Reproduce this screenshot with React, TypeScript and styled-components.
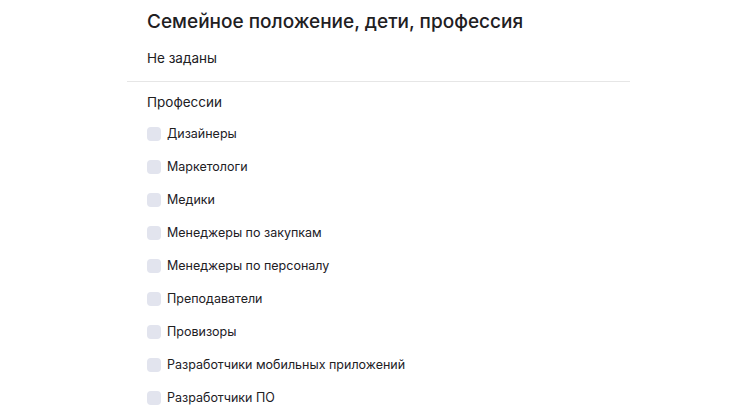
import React from 'react';
import styled, { createGlobalStyle } from 'styled-components';

const GlobalStyle = createGlobalStyle`
  html, body {
    margin: 0;
    padding: 0;
    background: #fff;
  }
  body {
    font-family: Inter, "Noto Sans", sans-serif;
    color: #21201f;
  }
`;

const professions = [
  'Дизайнеры',
  'Маркетологи',
  'Медики',
  'Менеджеры по закупкам',
  'Менеджеры по персоналу',
  'Преподаватели',
  'Провизоры',
  'Разработчики мобильных приложений',
  'Разработчики ПО',
];

const App = () => {
  return (
    <>
      <GlobalStyle />
      <Panel>
        <Header>
          <Title>Семейное положение, дети, профессия</Title>
          <Summary>Не заданы</Summary>
        </Header>
        <Section>
          <SectionTitle>Профессии</SectionTitle>
          <List>
            {professions.map((p) => (
              <Option key={p}>
                <Box type="checkbox" />
                <span>{p}</span>
              </Option>
            ))}
          </List>
        </Section>
      </Panel>
    </>
  );
};

export default App;

const Panel = styled.div`
  width: 503px;
  margin-left: 127px;
`;

const Header = styled.div`
  padding: 9px 20px 15px;
  border-bottom: 1px solid #e6e6e6;
`;

const Title = styled.h2`
  margin: 0;
  font-size: 19px;
  line-height: 26px;
  font-weight: 500;
  color: #21201f;
`;

const Summary = styled.div`
  margin-top: 15px;
  font-size: 13.5px;
  line-height: 16px;
`;

const Section = styled.div`
  padding: 12px 20px 0;
`;

const SectionTitle = styled.div`
  font-size: 13.5px;
  line-height: 16px;
  color: #21201f;
`;

const List = styled.div`
  display: flex;
  flex-direction: column;
  gap: 17px;
  margin-top: 16px;
`;

const Option = styled.label`
  display: flex;
  align-items: center;
  gap: 6px;
  font-size: 12.5px;
  line-height: 16px;
  color: #21201f;
`;

const Box = styled.input`
  appearance: none;
  margin: 0;
  width: 14px;
  height: 14px;
  border-radius: 4px;
  background: #e2e4ee;
  flex-shrink: 0;
`;
